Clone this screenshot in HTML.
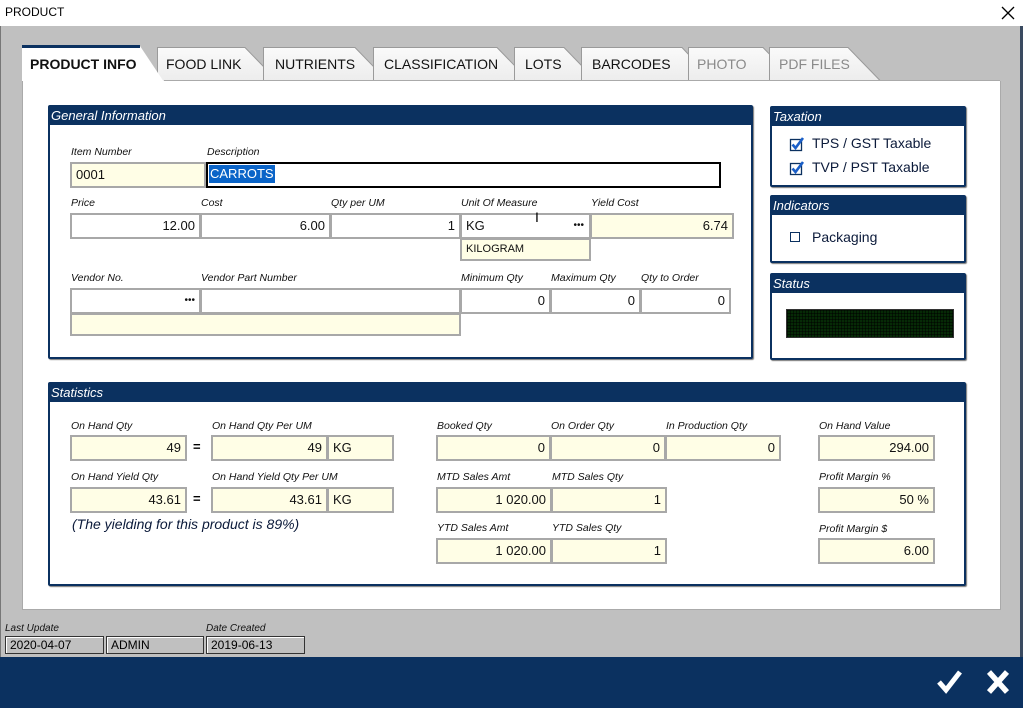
<!DOCTYPE html>
<html><head><meta charset="utf-8"><style>
*{box-sizing:border-box;margin:0;padding:0}
body{width:1023px;height:708px;overflow:hidden;background:#c0c0c0;font-family:"Liberation Sans",sans-serif;position:relative}
.a{position:absolute}
.t{position:absolute;font-size:13px;color:#000}
.lb{position:absolute;font-size:10.5px;font-style:italic;color:#111;white-space:nowrap}
.f{position:absolute;height:26px;border:2px solid #a8a8a8;background:#fff;font-size:13px;line-height:22px;padding:0 4px;white-space:nowrap;color:#111}
.y{background:#fffee6}
.r{text-align:right}
.box{position:absolute;border:2px solid #0b3160;background:#fff;border-radius:2px;box-shadow:1px 1px 1px #777}
.hd{background:#0b3160;color:#fff;font-style:italic;font-size:13px;height:18px;line-height:17px;padding-left:1px}
.tab{position:absolute;font-size:14px;top:56px;color:#111}
.ft{position:absolute;height:18px;border:1px solid #333;background:#c0c0c0;font-size:12px;line-height:16px;padding-left:4px;top:636px;box-shadow:inset 1px 1px 0 #fff}
</style></head><body>
<div class="a" style="left:0;top:0;width:1023px;height:26px;background:#fff"></div>
<div class="t" style="left:5px;top:5px;font-size:12px">PRODUCT</div>
<svg class="a" style="left:1001px;top:6px" width="14" height="14"><path d="M1 1L13 13M13 1L1 13" stroke="#000" stroke-width="1.3"/></svg>
<div class="a" style="left:1020px;top:26px;width:3px;height:631px;background:#3a4a60"></div>
<div class="a" style="left:0;top:26px;width:1px;height:631px;background:#777"></div>

<svg class="a" style="left:0;top:40px" width="1023" height="45">
<defs><linearGradient id="g" x1="0" y1="0" x2="0" y2="1"><stop offset="0" stop-color="#fafafa"/><stop offset="1" stop-color="#ececec"/></linearGradient></defs>
<g fill="url(#g)" stroke="#9a9a9a" stroke-width="1">
<path d="M157.5 42V7.5H245L278 41.5"/>
<path d="M263.5 42V7.5H355L388 41.5"/>
<path d="M373.5 42V7.5H497L530 41.5"/>
<path d="M514.5 42V7.5H564L597 41.5"/>
<path d="M581.5 42V7.5H682L714 41.5"/>
<path d="M688.5 42V7.5H763L796 41.5"/>
<path d="M769.5 42V7.5H848L881 41.5"/>
</g>
<path d="M22 42V6H140L164 42Z" fill="#fff"/>
<path d="M22 6.5H140" stroke="#0b3160" stroke-width="3"/>
</svg>
<div class="a" style="left:22px;top:81px;width:979px;height:529px;background:#fff;border:1px solid #aaa;border-top:none"></div>
<div class="a" style="left:164px;top:80px;width:836px;height:1px;background:#aaa"></div>
<div class="tab" style="left:30px;font-weight:bold">PRODUCT INFO</div>
<div class="tab" style="left:166px">FOOD LINK</div>
<div class="tab" style="left:275px">NUTRIENTS</div>
<div class="tab" style="left:384px">CLASSIFICATION</div>
<div class="tab" style="left:525px">LOTS</div>
<div class="tab" style="left:592px">BARCODES</div>
<div class="tab" style="left:697px;color:#8a8a8a">PHOTO</div>
<div class="tab" style="left:779px;color:#8a8a8a">PDF FILES</div>

<div class="box" style="left:48px;top:105px;width:705px;height:254px"><div class="hd">General Information</div></div>
<div class="lb" style="left:71px;top:146px">Item Number</div>
<div class="lb" style="left:207px;top:146px">Description</div>
<div class="f y" style="left:70px;top:162px;width:136px">0001</div>
<div class="a" style="left:206px;top:162px;width:515px;height:26px;border:2px solid #000;background:#fff"></div>
<div class="a" style="left:209px;top:165px;height:18px;background:#0a64c8;color:#fff;font-size:13px;line-height:18px;padding:0 1px;white-space:nowrap">CARROTS</div>

<div class="lb" style="left:71px;top:197px">Price</div>
<div class="lb" style="left:201px;top:197px">Cost</div>
<div class="lb" style="left:331px;top:197px">Qty per UM</div>
<div class="lb" style="left:461px;top:197px">Unit Of Measure</div>
<div class="lb" style="left:591px;top:197px">Yield Cost</div>
<div class="f r" style="left:70px;top:213px;width:131px">12.00</div>
<div class="f r" style="left:200px;top:213px;width:131px">6.00</div>
<div class="f r" style="left:330px;top:213px;width:131px">1</div>
<div class="f" style="left:460px;top:213px;width:131px">KG<span style="position:absolute;right:5px;font-size:10px">•••</span></div>
<div class="t" style="left:535px;top:209px;font-size:14px">I</div>
<div class="f y r" style="left:590px;top:213px;width:144px">6.74</div>
<div class="f y" style="left:460px;top:238px;width:131px;height:23px;font-size:11px;line-height:19px">KILOGRAM</div>

<div class="lb" style="left:71px;top:272px">Vendor No.</div>
<div class="lb" style="left:201px;top:272px">Vendor Part Number</div>
<div class="lb" style="left:461px;top:272px">Minimum Qty</div>
<div class="lb" style="left:551px;top:272px">Maximum Qty</div>
<div class="lb" style="left:641px;top:272px">Qty to Order</div>
<div class="f r" style="left:70px;top:288px;width:131px;font-size:10px">•••</div>
<div class="f" style="left:200px;top:288px;width:261px"></div>
<div class="f r" style="left:460px;top:288px;width:91px">0</div>
<div class="f r" style="left:550px;top:288px;width:91px">0</div>
<div class="f r" style="left:640px;top:288px;width:91px">0</div>
<div class="f y" style="left:70px;top:313px;width:391px;height:23px"></div>

<div class="box" style="left:770px;top:106px;width:196px;height:81px"><div class="hd">Taxation</div></div>
<svg class="a" style="left:789px;top:136px" width="16" height="40"><g fill="none"><rect x="1.5" y="3.5" width="11" height="11" stroke="#0b3160" stroke-width="1.3"/><path d="M3.5 8.5L6.5 12L14 2" stroke="#1a5fc8" stroke-width="2.6"/><rect x="1.5" y="27.5" width="11" height="11" stroke="#0b3160" stroke-width="1.3"/><path d="M3.5 32.5L6.5 36L14 26" stroke="#1a5fc8" stroke-width="2.6"/></g></svg>
<div class="t" style="left:812px;top:135px;font-size:14px;color:#0b1a3a">TPS / GST Taxable</div>
<div class="t" style="left:812px;top:159px;font-size:14px;color:#0b1a3a">TVP / PST Taxable</div>
<div class="box" style="left:770px;top:195px;width:196px;height:68px"><div class="hd">Indicators</div></div>
<div class="a" style="left:790px;top:232px;width:10px;height:10px;border:1px solid #0b3160"></div>
<div class="t" style="left:812px;top:229px;font-size:14px;color:#0b1a3a">Packaging</div>
<div class="box" style="left:770px;top:273px;width:196px;height:87px"><div class="hd">Status</div></div>
<div class="a" style="left:786px;top:309px;width:168px;height:29px;background:#062a06;background-image:linear-gradient(90deg,rgba(0,0,0,.5) 1px,transparent 1px),linear-gradient(rgba(0,0,0,.5) 1px,transparent 1px);background-size:3px 3px;border:1px solid #333"></div>

<div class="box" style="left:48px;top:382px;width:918px;height:204px"><div class="hd">Statistics</div></div>
<div class="lb" style="left:71px;top:420px">On Hand Qty</div>
<div class="lb" style="left:212px;top:420px">On Hand Qty Per UM</div>
<div class="f y r" style="left:70px;top:435px;width:117px">49</div>
<div class="t" style="left:193px;top:439px;font-weight:bold">=</div>
<div class="f y r" style="left:211px;top:435px;width:117px">49</div>
<div class="f y" style="left:327px;top:435px;width:67px">KG</div>
<div class="lb" style="left:71px;top:471px">On Hand Yield Qty</div>
<div class="lb" style="left:212px;top:471px">On Hand Yield Qty Per UM</div>
<div class="f y r" style="left:70px;top:487px;width:117px">43.61</div>
<div class="t" style="left:193px;top:491px;font-weight:bold">=</div>
<div class="f y r" style="left:211px;top:487px;width:117px">43.61</div>
<div class="f y" style="left:327px;top:487px;width:67px">KG</div>
<div class="t" style="left:72px;top:516px;font-size:14px;font-style:italic;color:#0b1a3a">(The yielding for this product is 89%)</div>

<div class="lb" style="left:437px;top:420px">Booked Qty</div>
<div class="lb" style="left:551px;top:420px">On Order Qty</div>
<div class="lb" style="left:666px;top:420px">In Production Qty</div>
<div class="f y r" style="left:436px;top:435px;width:115px">0</div>
<div class="f y r" style="left:550px;top:435px;width:116px">0</div>
<div class="f y r" style="left:665px;top:435px;width:116px">0</div>
<div class="lb" style="left:437px;top:471px">MTD Sales Amt</div>
<div class="lb" style="left:552px;top:471px">MTD Sales Qty</div>
<div class="f y r" style="left:436px;top:487px;width:116px">1 020.00</div>
<div class="f y r" style="left:551px;top:487px;width:116px">1</div>
<div class="lb" style="left:437px;top:522px">YTD Sales Amt</div>
<div class="lb" style="left:552px;top:522px">YTD Sales Qty</div>
<div class="f y r" style="left:436px;top:538px;width:116px">1 020.00</div>
<div class="f y r" style="left:551px;top:538px;width:116px">1</div>

<div class="lb" style="left:819px;top:420px">On Hand Value</div>
<div class="f y r" style="left:818px;top:435px;width:117px">294.00</div>
<div class="lb" style="left:819px;top:471px">Profit Margin %</div>
<div class="f y r" style="left:818px;top:487px;width:117px">50 %</div>
<div class="lb" style="left:819px;top:523px">Profit Margin $</div>
<div class="f y r" style="left:818px;top:538px;width:117px">6.00</div>

<div class="lb" style="left:5px;top:623px;font-size:10px">Last Update</div>
<div class="lb" style="left:206px;top:623px;font-size:10px">Date Created</div>
<div class="ft" style="left:5px;width:99px">2020-04-07</div>
<div class="ft" style="left:106px;width:98px">ADMIN</div>
<div class="ft" style="left:206px;width:99px">2019-06-13</div>

<div class="a" style="left:0;top:657px;width:1023px;height:51px;background:#0b3160"></div>
<svg class="a" style="left:935px;top:668px" width="80" height="28"><path d="M4 14L11 22L25 4" stroke="#fff" stroke-width="5" fill="none"/><path d="M54 4L72 24M72 4L54 24" stroke="#fff" stroke-width="5.5"/></svg>
</body></html>
